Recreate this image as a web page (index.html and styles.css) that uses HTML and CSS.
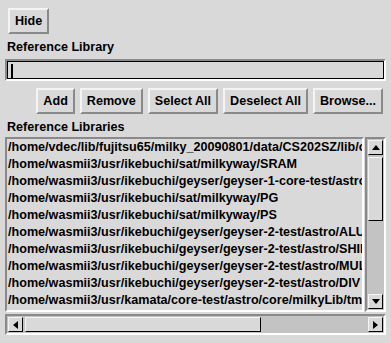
FILE: index.html
```html
<!DOCTYPE html>
<html lang="en">

<head>
    <meta charset="UTF-8">
    <title>Reference Library</title>
    <link rel="stylesheet" href="styles.css">
</head>

<body>
    <div class="panel">
        <div class="top-row">
            <button class="tk-btn">Hide</button>
        </div>
        <div class="tk-label first">Reference Library</div>
        <div class="entry"><span class="cursor"></span></div>
        <div class="actions">
            <button class="tk-btn">Add</button>
            <button class="tk-btn">Remove</button>
            <button class="tk-btn">Select All</button>
            <button class="tk-btn">Deselect All</button>
            <button class="tk-btn">Browse...</button>
        </div>
        <div class="tk-label second">Reference Libraries</div>
        <div class="list-area">
            <div class="listbox">
                <div class="row">/home/vdec/lib/fujitsu65/milky_20090801/data/CS202SZ/lib/core/milkyway</div>
                <div class="row">/home/wasmii3/usr/ikebuchi/sat/milkyway/SRAM</div>
                <div class="row">/home/wasmii3/usr/ikebuchi/geyser/geyser-1-core-test/astro/core</div>
                <div class="row">/home/wasmii3/usr/ikebuchi/sat/milkyway/PG</div>
                <div class="row">/home/wasmii3/usr/ikebuchi/sat/milkyway/PS</div>
                <div class="row">/home/wasmii3/usr/ikebuchi/geyser/geyser-2-test/astro/ALU</div>
                <div class="row">/home/wasmii3/usr/ikebuchi/geyser/geyser-2-test/astro/SHIFTER</div>
                <div class="row">/home/wasmii3/usr/ikebuchi/geyser/geyser-2-test/astro/MULT</div>
                <div class="row">/home/wasmii3/usr/ikebuchi/geyser/geyser-2-test/astro/DIV</div>
                <div class="row">/home/wasmii3/usr/kamata/core-test/astro/core/milkyLib/tmp</div>
            </div>
            <div class="vscroll">
                <div class="arrow"><span class="tri up"></span></div>
                <div class="thumb-v"></div>
                <div class="trough"></div>
                <div class="arrow"><span class="tri down"></span></div>
            </div>
        </div>
        <div class="hscroll">
            <div class="arrow"><span class="tri left"></span></div>
            <div class="thumb-h"></div>
            <div class="trough"></div>
            <div class="arrow"><span class="tri right"></span></div>
        </div>
    </div>
</body>

</html>
```

FILE: styles.css
```css
body {
    margin: 0;
    background-color: #d9d9d9;
    font-family: "Liberation Sans", Arial, sans-serif;
    font-weight: bold;
    font-size: 12.6px;
    color: #000;
}

.panel {
    width: 391px;
    height: 343px;
    padding: 8px 5px 0 5px;
    box-sizing: border-box;
}

.top-row {
    display: flex;
    padding-left: 3px;
}

.tk-btn {
    font-family: inherit;
    font-weight: bold;
    font-size: 12.6px;
    color: #000;
    background-color: #d9d9d9;
    height: 26px;
    padding: 0 5px;
    border: 2px solid;
    border-color: #f4f4f4 #8a8a8a #8a8a8a #f4f4f4;
    margin: 0;
}

.tk-label {
    height: 17px;
    line-height: 17px;
    padding-left: 2px;
}

.tk-label.first {
    margin-top: 5px;
}

.tk-label.second {
    margin-top: 5px;
    margin-bottom: 1px;
}

.entry {
    height: 22px;
    margin-top: 3px;
    border: 2px solid;
    border-color: #8a8a8a #fff #fff #8a8a8a;
    box-shadow: inset 0 0 0 1px #000;
    box-sizing: border-box;
    padding: 3px 0 0 4px;
}

.cursor {
    display: block;
    width: 2px;
    height: 15px;
    background-color: #000;
}

.actions {
    display: flex;
    justify-content: flex-end;
    gap: 5px;
    margin-top: 7px;
    padding-right: 3px;
}

.list-area {
    display: flex;
    height: 175px;
}

.listbox {
    flex: 1;
    overflow: hidden;
    border: 2px solid;
    border-color: #8a8a8a #fff #fff #8a8a8a;
    padding-left: 1px;
}

.row {
    height: 17px;
    line-height: 17px;
    white-space: nowrap;
}

.vscroll {
    width: 21px;
    margin-left: 1px;
    display: flex;
    flex-direction: column;
    border: 2px solid;
    border-color: #8a8a8a #fff #fff #8a8a8a;
    background-color: #c3c3c3;
    padding: 1px;
    box-sizing: border-box;
    gap: 2px;
}

.hscroll {
    height: 21px;
    margin-top: 2px;
    display: flex;
    border: 2px solid;
    border-color: #8a8a8a #fff #fff #8a8a8a;
    background-color: #c3c3c3;
    padding: 1px;
    box-sizing: border-box;
    gap: 2px;
}

.arrow {
    width: 13px;
    height: 13px;
    flex: none;
    border: 1px solid;
    border-color: #f4f4f4 #000 #000 #f4f4f4;
    background-color: #d9d9d9;
    display: flex;
    justify-content: center;
    align-items: center;
}

.thumb-v {
    height: 62px;
    flex: none;
    border: 1px solid;
    border-color: #f4f4f4 #000 #000 #f4f4f4;
    background-color: #d9d9d9;
}

.thumb-h {
    width: 234px;
    flex: none;
    border: 1px solid;
    border-color: #f4f4f4 #000 #000 #f4f4f4;
    background-color: #d9d9d9;
}

.trough {
    flex: 1;
}

.tri {
    width: 0;
    height: 0;
    border-style: solid;
}

.tri.up {
    border-width: 0 4px 5px 4px;
    border-color: transparent transparent #000 transparent;
}

.tri.down {
    border-width: 5px 4px 0 4px;
    border-color: #000 transparent transparent transparent;
}

.tri.left {
    border-width: 4px 5px 4px 0;
    border-color: transparent #000 transparent transparent;
}

.tri.right {
    border-width: 4px 0 4px 5px;
    border-color: transparent transparent transparent #000;
}
```
